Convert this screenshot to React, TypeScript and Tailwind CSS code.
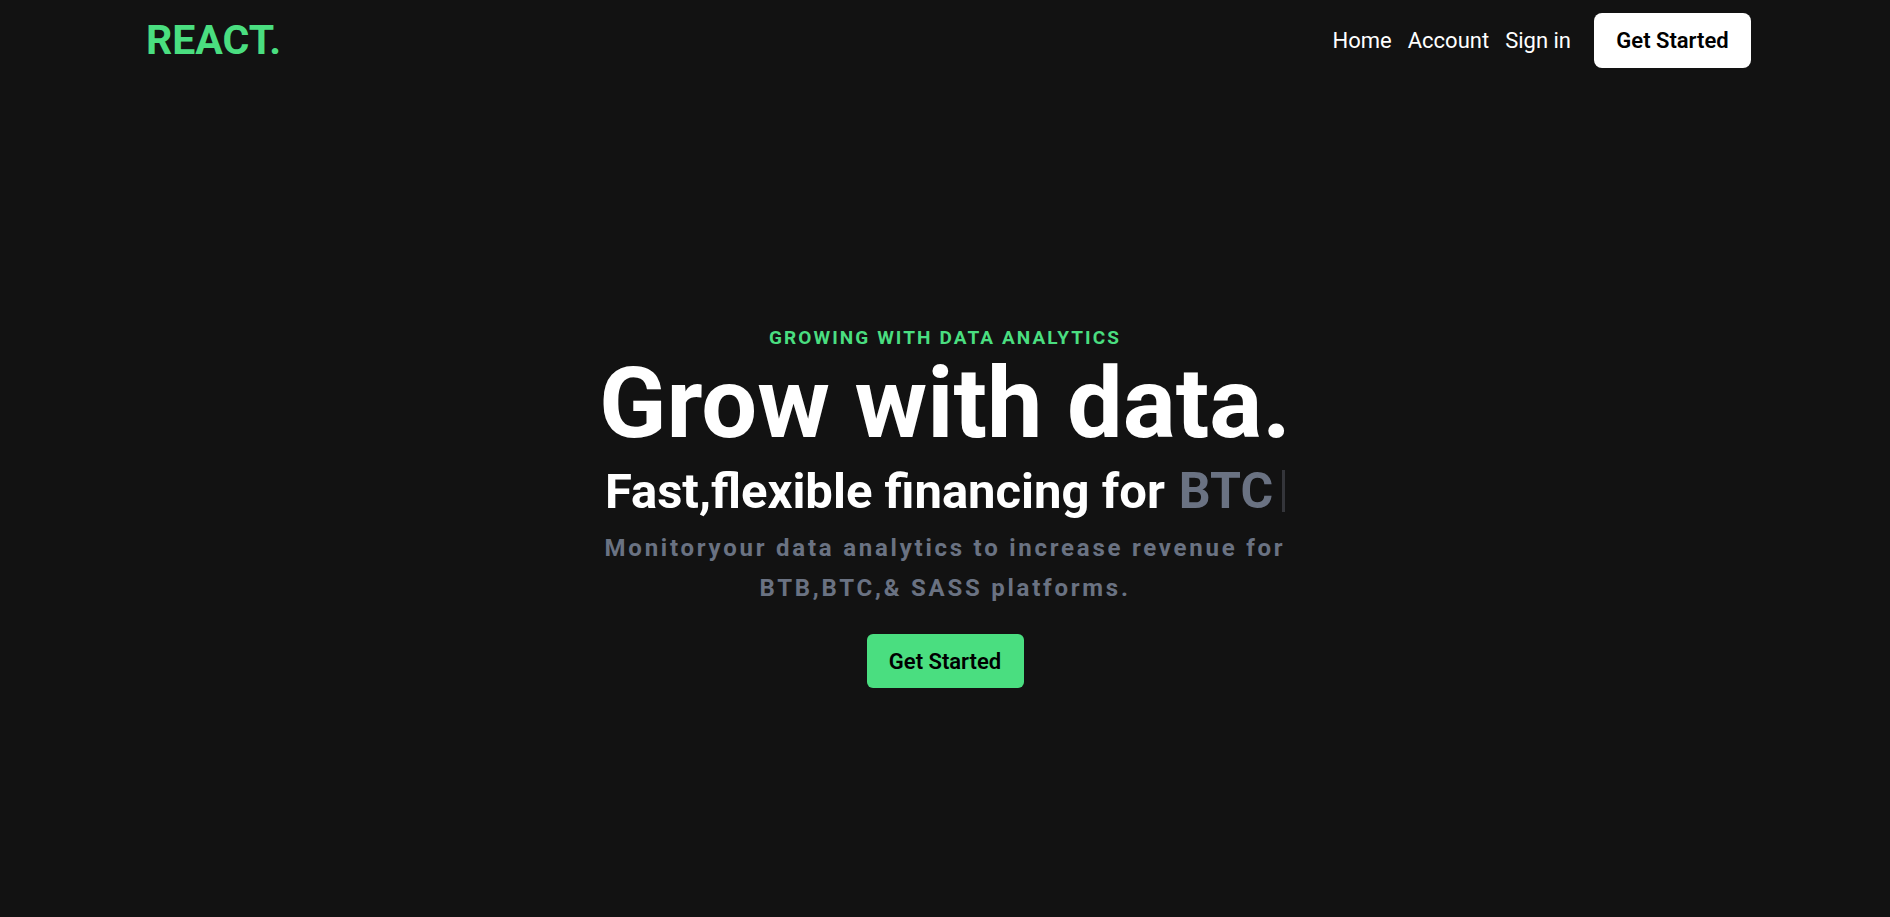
export default function App() {
  return (
    <div className="min-h-screen w-full bg-[#121212] font-['Roboto',sans-serif] text-white">
      {/* Navbar */}
      <div className="flex h-20 w-full items-center justify-between pl-[146px] pr-[139px]">
        <h1 className="text-[41px] font-bold leading-none text-[#4ade80]">REACT.</h1>
        <ul className="flex items-center gap-[16px] text-[22px]">
          <li>Home</li>
          <li>Account</li>
          <li>Sign in</li>
          <li>
            <button className="ml-[7px] flex h-[55px] w-[157px] items-center justify-center rounded-lg bg-white text-[22px] font-semibold text-black">
              Get Started
            </button>
          </li>
        </ul>
      </div>

      {/* Hero */}
      <div className="mx-auto flex w-full max-w-[720px] flex-col items-center pt-[244px] text-center">
        <p className="text-[19px] font-bold uppercase leading-7 tracking-[0.11em] text-[#4ade80]">
          Growing with data analytics
        </p>
        <h1 className="mt-0.5 whitespace-nowrap text-[99px] font-bold leading-none">Grow with data.</h1>
        <div className="mt-[13px] flex items-center justify-center whitespace-nowrap">
          <p className="text-[49px] font-bold leading-none">Fast,flexible financing for</p>
          <p className="pl-[14px] text-[50px] font-bold leading-none text-gray-500">BTC</p>
          <span className="ml-[9px] inline-block h-[42px] w-[3px] bg-[#34353a]" />
        </div>
        <p className="mt-3 text-2xl font-bold leading-10 tracking-[0.115em] text-gray-500">
          Monitoryour data analytics to increase revenue for BTB,BTC,&amp; SASS platforms.
        </p>
        <button className="mt-[26px] flex h-[54px] w-[157px] items-center justify-center rounded-md bg-[#4ade80] text-[22px] font-semibold text-black">
          Get Started
        </button>
      </div>
    </div>
  );
}
